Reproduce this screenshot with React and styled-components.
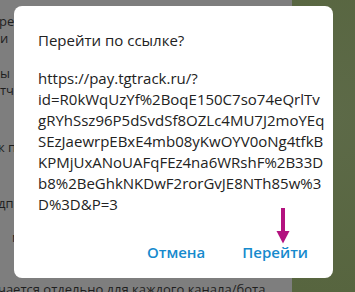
import React from 'react'
import styled, { createGlobalStyle } from 'styled-components'

const GlobalStyle = createGlobalStyle`
  html, body {
    margin: 0;
    padding: 0;
    width: 355px;
    height: 292px;
    overflow: hidden;
    font-family: 'Open Sans', 'Noto Sans', sans-serif;
  }
`

const Screen = styled.div`
  position: relative;
  display: flex;
  width: 355px;
  height: 292px;
  overflow: hidden;
`

const ChatPanel = styled.div`
  width: 292px;
  flex-shrink: 0;
  display: flex;
  flex-direction: column;
  background: #7e7e7e;
  color: #1e1e1e;
  font-size: 13px;
  line-height: 15px;
  white-space: nowrap;
  overflow: hidden;
`

const ChatLine = styled.div`
  margin-top: ${props => props.gap}px;
  margin-left: ${props => props.shift || 0}px;
`

const Wallpaper = styled.div`
  flex: 1;
  background: radial-gradient(circle at 60% 40%, #5d6a48 0%, #57653f 100%);
`

const Dialog = styled.div`
  position: absolute;
  left: 14px;
  top: 6px;
  width: 319px;
  height: 272px;
  box-sizing: border-box;
  background: #ffffff;
  border-radius: 8px;
  padding: 24px 0 0 24px;
  display: flex;
  flex-direction: column;
`

const Title = styled.div`
  font-size: 15px;
  line-height: 20px;
  color: #222222;
`

const Url = styled.div`
  margin-top: 18px;
  font-size: 15px;
  line-height: 21px;
  color: #222222;
  white-space: nowrap;
`

const Actions = styled.div`
  margin-top: auto;
  margin-bottom: 16px;
  display: flex;
  justify-content: flex-end;
  gap: 37px;
  padding-right: 25px;
`

const ActionButton = styled.button`
  border: none;
  background: none;
  padding: 0;
  font-family: inherit;
  font-size: 15px;
  font-weight: 550;
  line-height: 20px;
  color: #168acd;
  cursor: pointer;
`

const Arrow = styled.svg`
  position: absolute;
  left: 262px;
  top: 202px;
`

const urlLines = [
  'https://pay.tgtrack.ru/?',
  'id=R0kWqUzYf%2BoqE150C7so74eQrlTv',
  'gRYhSsz96P5dSvdSf8OZLc4MU7J2moYEq',
  'SEzJaewrpEBxE4mb08yKwOYV0oNg4tfkB',
  'KPMjUxANoUAFqFEz4na6WRshF%2B33D',
  'b8%2BeGhkNKDwF2rorGvJE8NTh85w%3',
  'D%3D&P=3',
]

const chatLines = [
  { text: 'ре', gap: 14, shift: -1 },
  { text: 'и', gap: 2, shift: 0 },
  { text: 'ы', gap: 20, shift: 0 },
  { text: 'тче', gap: 2, shift: 0 },
  { text: 'к п', gap: 42, shift: -2 },
  { text: 'дп', gap: 41, shift: -2 },
  { text: 'м', gap: 19, shift: 12 },
  { text: 'чается отдельно для каждого канала/бота', gap: 37, shift: -2 },
]

export default function App() {
  return (
    <>
      <GlobalStyle />
      <Screen>
        <ChatPanel>
          {chatLines.map((line, i) => (
            <ChatLine key={i} gap={line.gap} shift={line.shift}>
              {line.text}
            </ChatLine>
          ))}
        </ChatPanel>
        <Wallpaper />

        <Dialog>
          <Title>Перейти по ссылке?</Title>
          <Url>
            {urlLines.map(line => (
              <div key={line}>{line}</div>
            ))}
          </Url>
          <Actions>
            <ActionButton>Отмена</ActionButton>
            <ActionButton>Перейти</ActionButton>
          </Actions>
          <Arrow width="14" height="36" viewBox="0 0 14 36">
            <rect x="5" y="0" width="4" height="25" fill="#b3127f" />
            <path d="M0.5 23 L13.5 23 L7 35.5 Z" fill="#b3127f" />
          </Arrow>
        </Dialog>
      </Screen>
    </>
  )
}
